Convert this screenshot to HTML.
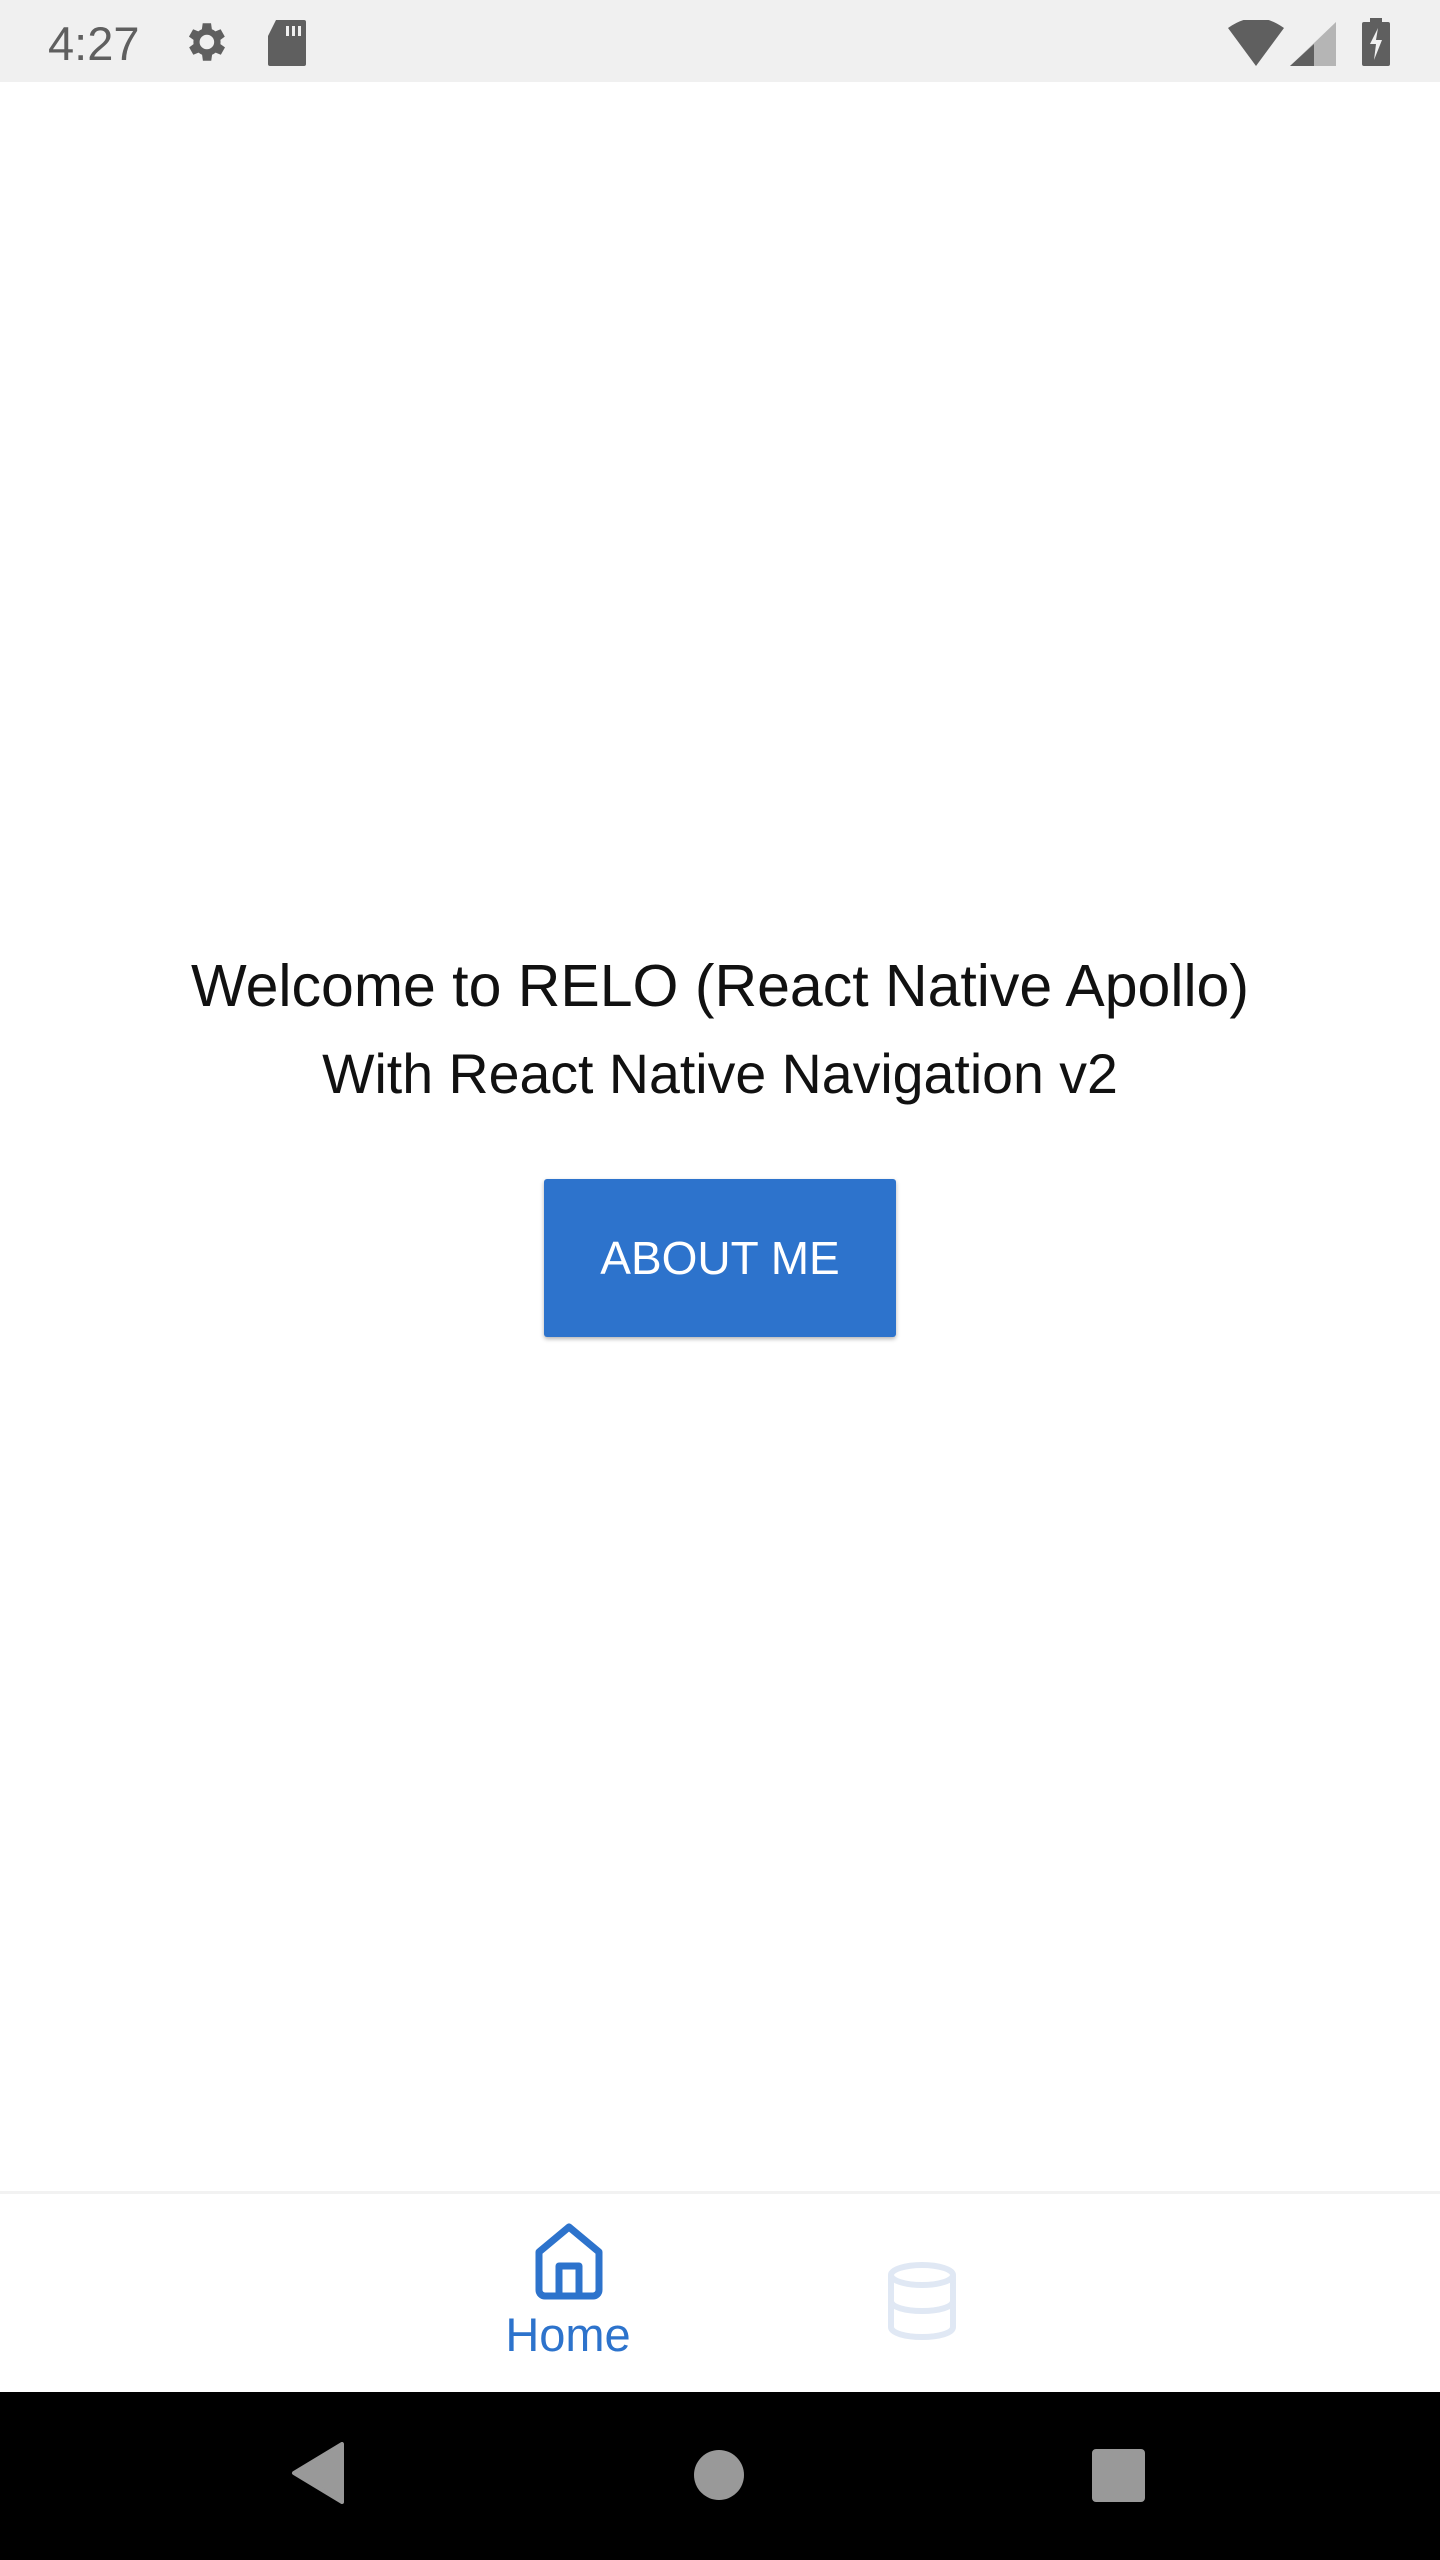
<!DOCTYPE html>
<html><head><style>
body{margin:0;width:1440px;height:2560px;position:relative;background:#fff;font-family:"Liberation Sans",Roboto,sans-serif;overflow:hidden}
.sb{position:absolute;left:0;top:0;width:1440px;height:82px;background:#f0f0f0}
.t{position:absolute;width:1440px;text-align:center;color:#111}
.btn{position:absolute;left:544px;top:1179px;width:352px;height:158px;background:#2d73cc;border-radius:3px;box-shadow:0 2px 4px rgba(0,0,0,.3);color:#fff;font-size:46px;display:flex;align-items:center;justify-content:center}
.tab{position:absolute;left:0;top:2191px;width:1440px;height:201px;border-top:3px solid #f2f2f2;background:#fff}
.nav{position:absolute;left:0;top:2392px;width:1440px;height:168px;background:#000}
</style></head><body>
<div class="sb">
<div style="position:absolute;left:48px;top:16px;font-size:47px;color:#5f5f5f">4:27</div>
<svg style="position:absolute;left:180px;top:17px" width="50" height="50" viewBox="0 0 24 24"><path fill="#5f5f5f" d="M19.4 13a7.5 7.5 0 0 0 0-2l2.1-1.6-2-3.5-2.5 1a7.3 7.3 0 0 0-1.7-1L14.9 3h-4l-.4 2.9a7.3 7.3 0 0 0-1.7 1l-2.5-1-2 3.5L6.5 11a7.5 7.5 0 0 0 0 2l-2.1 1.6 2 3.5 2.5-1a7.3 7.3 0 0 0 1.7 1l.4 2.9h4l.4-2.9a7.3 7.3 0 0 0 1.7-1l2.5 1 2-3.5zM12.9 15.5a3.5 3.5 0 1 1 0-7 3.5 3.5 0 0 1 0 7z"/></svg>
<svg style="position:absolute;left:268px;top:20px" width="38" height="46" viewBox="0 0 19 23"><path fill="#5f5f5f" d="M4 0h14a1 1 0 0 1 1 1v21a1 1 0 0 1-1 1H1a1 1 0 0 1-1-1V8z"/><rect x="9" y="3" width="1.5" height="5" fill="#f0f0f0"/><rect x="12" y="3" width="1.5" height="5" fill="#f0f0f0"/><rect x="15" y="3" width="1.5" height="5" fill="#f0f0f0"/></svg>
<svg style="position:absolute;left:1228px;top:20px" width="56" height="46" viewBox="0 0 28 23"><path fill="#5f5f5f" d="M14 23L0 4Q14-6 28 4z"/></svg>
<svg style="position:absolute;left:1290px;top:22px" width="46" height="44" viewBox="0 0 23 22"><path fill="#b5b5b5" d="M23 0v22H0z"/><path fill="#5f5f5f" d="M12 11v11H0z"/></svg>
<svg style="position:absolute;left:1362px;top:18px" width="28" height="48" viewBox="0 0 14 24"><path fill="#5f5f5f" d="M4 0h6v2h3a1 1 0 0 1 1 1v20a1 1 0 0 1-1 1H1a1 1 0 0 1-1-1V3a1 1 0 0 1 1-1h3z"/><path fill="#f0f0f0" d="M8 5L4 13h3l-1 8 4-10H7z"/></svg>
</div>
<div class="t" style="top:952px;font-size:59px">Welcome to RELO (React Native Apollo)</div>
<div class="t" style="top:1042px;font-size:55.5px">With React Native Navigation v2</div>
<div class="btn">ABOUT ME</div>
<div class="tab">
<svg style="position:absolute;left:532px;top:28px" width="74" height="80" viewBox="0 0 74 80"><path d="M7 30L37 5l30 25v38a6 6 0 0 1-6 6H13a6 6 0 0 1-6-6z M27 74V44h20v30" fill="none" stroke="#2d73cc" stroke-width="7" stroke-linejoin="round"/></svg>
<div style="position:absolute;left:468px;top:113px;width:200px;text-align:center;font-size:47px;color:#2d73cc">Home</div>
<svg style="position:absolute;left:886px;top:67px" width="72" height="80" viewBox="0 0 72 80"><g fill="none" stroke="#e0e8f4" stroke-width="6"><ellipse cx="36" cy="14" rx="31" ry="10"/><path d="M5 14v52c0 6 14 10 31 10s31-4 31-10V14M5 40c0 6 14 10 31 10s31-4 31-10"/></g></svg>
</div>
<div class="nav">
<svg style="position:absolute;left:290px;top:50px" width="54" height="62" viewBox="0 0 54 62"><path d="M52 2v58L4 31z" fill="#999" stroke="#999" stroke-width="4" stroke-linejoin="round"/></svg>
<div style="position:absolute;left:694px;top:58px;width:50px;height:50px;border-radius:50%;background:#999"></div>
<div style="position:absolute;left:1092px;top:57px;width:53px;height:53px;border-radius:4px;background:#999"></div>
</div>
</body></html>
